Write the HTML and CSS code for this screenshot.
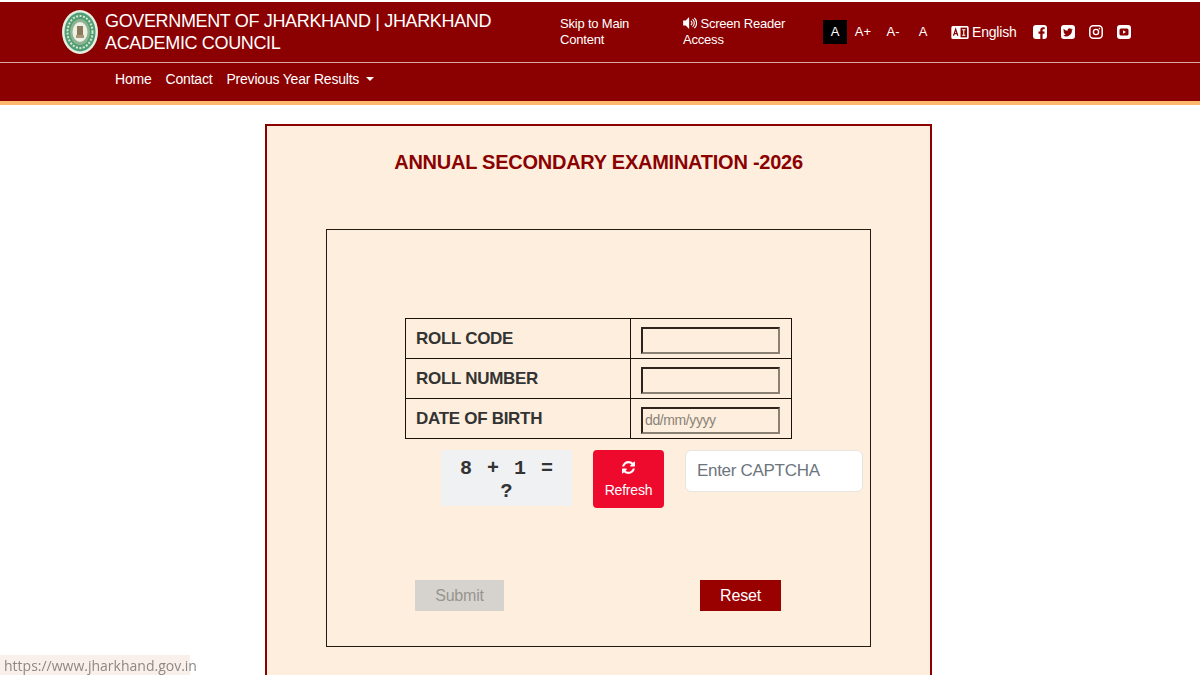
FILE: index.html
```html
<!DOCTYPE html>
<html lang="en">
<head>
    <meta charset="UTF-8">
    <meta name="viewport" content="width=device-width, initial-scale=1.0">
    <title>Annual Secondary Examination 2026</title>
    <link rel="stylesheet" href="styles.css">
</head>
<body>
    <header class="site-header">
        <div class="top-bar">
            <div class="brand">
                <svg class="emblem" viewBox="0 0 36 44">
                    <ellipse cx="18" cy="22" rx="18" ry="22" fill="#e6efe0"/>
                    <ellipse cx="18" cy="22" rx="15.5" ry="19.5" fill="#4f9d78"/>
                    <ellipse cx="18" cy="22" rx="12.5" ry="16" fill="none" stroke="#d9e6c8" stroke-width="2" stroke-dasharray="2 1.5"/>
                    <ellipse cx="18" cy="22" rx="10" ry="13" fill="#8fb58f"/>
                    <ellipse cx="18" cy="22" rx="7.5" ry="10" fill="#eef0e6"/>
                    <rect x="15" y="16" width="6" height="9" fill="#8a7a5c"/>
                    <rect x="14" y="25" width="8" height="3" fill="#a8987a"/>
                </svg>
                <span class="brand-name">GOVERNMENT OF JHARKHAND | JHARKHAND ACADEMIC COUNCIL</span>
            </div>
            <a class="skip-link" href="#main">Skip to Main Content</a>
            <a class="reader-link" href="#">
                <svg class="speaker" viewBox="0 0 16 14">
                    <path d="M7 0v14L3 10H0V4h3z" fill="#fff"/>
                    <path d="M9 4.5a3 3 0 0 1 0 5M11 2.5a6 6 0 0 1 0 9M13 1a8 8 0 0 1 0 12" fill="none" stroke="#fff" stroke-width="1.3"/>
                </svg>
                Screen Reader Access
            </a>
            <div class="font-sizes">
                <span class="size-btn active">A</span>
                <span class="size-btn">A+</span>
                <span class="size-btn">A-</span>
                <span class="size-btn">A</span>
            </div>
            <a class="lang-link" href="#">
                <svg class="lang-icon" viewBox="0 0 16 12">
                    <rect width="16" height="12" rx="1.5" fill="#fff"/>
                    <rect x="8.5" y="1.5" width="6" height="9" fill="#8b0000"/>
                    <path d="M10 3.5h3M11.5 3.5v5M10 8.5h3" stroke="#fff" stroke-width="1" fill="none"/>
                    <path d="M2 9l2-6 2 6M2.8 7h2.4" stroke="#8b0000" stroke-width="1.1" fill="none"/>
                </svg>
                English
            </a>
            <div class="socials">
                <svg viewBox="0 0 14 14"><rect width="14" height="14" rx="3" fill="#fff"/><path d="M9.6 14V8.7h1.7l.3-2.2h-2V5.2c0-.6.3-1 1-1h1.1V2.3c-.4 0-1-.1-1.6-.1-1.7 0-2.8 1-2.8 2.8v1.5H5.500v2.200h1.800V14z" fill="#8b0000"/></svg>
                <svg viewBox="0 0 14 14"><rect width="14" height="14" rx="3" fill="#fff"/><path d="M11.500 4.200c-.4.200-.7.300-1.100.3.400-.2.700-.6.800-1-.4.200-.8.400-1.200.5a2 2 0 0 0-3.400 1.800C5 5.700 3.600 5 2.700 3.800c-.5.900-.2 2 .6 2.600-.3 0-.6-.1-.9-.2 0 .9.700 1.800 1.600 2-.3.100-.6.100-.9 0 .3.800 1 1.300 1.900 1.400-.8.600-1.900.9-2.900.8a5.700 5.700 0 0 0 8.800-5.100c.3-.2.600-.6.800-.9z" fill="#8b0000"/></svg>
                <svg viewBox="0 0 14 14"><rect x=".8" y=".8" width="12.400" height="12.400" rx="3.500" fill="none" stroke="#fff" stroke-width="1.500"/><circle cx="7" cy="7" r="2.600" fill="none" stroke="#fff" stroke-width="1.400"/><circle cx="10.400" cy="3.600" r=".8" fill="#fff"/></svg>
                <svg viewBox="0 0 14 14"><rect width="14" height="14" rx="3" fill="#fff"/><rect x="2.500" y="3.500" width="9" height="7" rx="1.500" fill="#8b0000"/><path d="M6 5.200v3.600L9 7z" fill="#fff"/></svg>
            </div>
        </div>
        <nav class="main-nav">
            <a href="#">Home</a>
            <a href="#">Contact</a>
            <a href="#" class="dropdown">Previous Year Results</a>
        </nav>
    </header>

    <main class="card" id="main">
        <h2 class="card-title">ANNUAL SECONDARY EXAMINATION -2026</h2>
        <div class="form-box">
            <table class="form-table">
                <tr>
                    <th>ROLL CODE</th>
                    <td><input type="text" class="field"></td>
                </tr>
                <tr>
                    <th>ROLL NUMBER</th>
                    <td><input type="text" class="field"></td>
                </tr>
                <tr>
                    <th>DATE OF BIRTH</th>
                    <td><input type="text" class="field" placeholder="dd/mm/yyyy"></td>
                </tr>
            </table>
            <div class="captcha-row">
                <div class="captcha-box">8 + 1 = ?</div>
                <button class="refresh-btn" type="button">
                    <svg class="refresh-icon" viewBox="0 0 1536 1536"><path d="M1511 928q0 5-1 7-64 268-268 434.5t-478 166.5q-146 0-282.5-55t-243.5-157l-129 129q-19 19-45 19t-45-19-19-45v-448q0-26 19-45t45-19h448q26 0 45 19t19 45-19 45l-137 137q71 66 161 102t187 36q134 0 250-65t186-179q11-17 53-117 8-23 30-23h192q13 0 22.500 9.500t9.500 22.500zm25-800v448q0 26-19 45t-45 19h-448q-26 0-45-19t-19-45 19-45l138-138q-148-137-349-137-134 0-250 65t-186 179q-11 17-53 117-8 23-30 23h-199q-13 0-22.500-9.500t-9.500-22.500v-7q65-268 270-434.500t480-166.500q146 0 284 55.500t245 156.500l130-129q19-19 45-19t45 19 19 45z" fill="#fff"/></svg>
                    Refresh
                </button>
                <input type="text" class="captcha-input" placeholder="Enter CAPTCHA">
            </div>
            <div class="actions">
                <button class="submit-btn" type="button" disabled>Submit</button>
                <button class="reset-btn" type="button">Reset</button>
            </div>
        </div>
    </main>

    <div class="status-bubble">https://www.jharkhand.gov.in</div>
</body>
</html>
```

FILE: styles.css
```css
html, body {
    height: 675px;
    overflow: hidden;
}
body {
    margin: 0;
    background: #fff;
    font-family: "Liberation Sans", Arial, sans-serif;
    color: #fff;
}
a {
    color: inherit;
    text-decoration: none;
}

/* Header */
.site-header {
    margin-top: 2px;
    background: #8b0000;
    border-bottom: 4px solid #fdb96b;
}
.top-bar {
    display: flex;
    align-items: center;
    height: 60px;
    padding-left: 62px;
    border-bottom: 1px solid #d9a9a6;
}
.brand {
    display: flex;
    align-items: center;
    gap: 7px;
    width: 498px;
}
.emblem {
    flex: none;
    width: 36px;
    height: 44px;
}
.brand-name {
    width: 400px;
    font-size: 18px;
    line-height: 22px;
    letter-spacing: -0.35px;
}
.skip-link {
    width: 123px;
    padding-right: 30px;
    box-sizing: border-box;
    font-size: 13px;
    line-height: 16px;
    letter-spacing: -0.2px;
}
.reader-link {
    width: 140px;
    padding-right: 30px;
    box-sizing: border-box;
    font-size: 13px;
    line-height: 16px;
    letter-spacing: -0.2px;
}
.speaker {
    width: 14px;
    height: 12px;
    vertical-align: -1px;
}
.font-sizes {
    display: flex;
    align-items: center;
    width: 128px;
    font-size: 13px;
}
.size-btn {
    width: 24px;
    height: 24px;
    margin-right: 6px;
    line-height: 24px;
    text-align: center;
}
.size-btn.active {
    background: #000;
    margin-right: 4px;
}
.lang-link {
    display: flex;
    align-items: center;
    gap: 3px;
    width: 82px;
    font-size: 14px;
    letter-spacing: -0.2px;
}
.lang-icon {
    width: 18px;
    height: 13px;
}
.socials {
    display: flex;
    gap: 14px;
}
.socials svg {
    width: 14px;
    height: 14px;
}
.main-nav {
    display: flex;
    gap: 14px;
    height: 38px;
    padding-left: 115px;
    font-size: 14px;
    line-height: 32px;
    letter-spacing: -0.2px;
}
.dropdown::after {
    content: "";
    display: inline-block;
    margin-left: 7px;
    vertical-align: 3px;
    border-top: 4px solid #fff;
    border-left: 4px solid transparent;
    border-right: 4px solid transparent;
}

/* Card */
.card {
    box-sizing: border-box;
    width: 667px;
    height: 640px;
    margin: 19px 0 0 265px;
    padding: 0 59px;
    background: #fdeedd;
    border: 2px solid #8b0000;
}
.card-title {
    margin: 24px 0 0;
    color: #8b0000;
    font-size: 20px;
    line-height: 24px;
    text-align: center;
    letter-spacing: -0.25px;
}
.form-box {
    box-sizing: border-box;
    width: 545px;
    height: 418px;
    margin-top: 55px;
    padding-top: 88px;
    border: 1px solid #231a12;
}
.form-table {
    width: 387px;
    margin-left: 78px;
    border-collapse: collapse;
}
.form-table th,
.form-table td {
    height: 39px;
    padding: 0;
    border: 1px solid #1a1208;
}
.form-table th {
    width: 225px;
    padding-left: 10px;
    box-sizing: border-box;
    color: #333;
    font-size: 17px;
    text-align: left;
    letter-spacing: -0.3px;
}
.field {
    display: block;
    box-sizing: border-box;
    width: 139px;
    height: 27px;
    margin: 3px 0 0 10px;
    padding: 0 2px;
    background: transparent;
    border: 2px solid;
    border-color: #2e241b #8a8174 #8a8174 #2e241b;
    font-family: inherit;
    font-size: 14px;
    letter-spacing: -0.4px;
}
.field::placeholder {
    color: #8a8378;
}
.captcha-row {
    display: flex;
    align-items: flex-start;
    margin: 11px 0 0 114px;
}
.captcha-box {
    box-sizing: border-box;
    width: 131px;
    height: 56px;
    padding: 7px 14px 0;
    background: #eff1f3;
    color: #333;
    font-family: "Liberation Mono", monospace;
    font-size: 20px;
    font-weight: bold;
    line-height: 23px;
    text-align: center;
    word-spacing: 3px;
}
.refresh-btn {
    width: 71px;
    height: 58px;
    margin-left: 21px;
    padding: 0;
    background: #ee0a2d;
    border: none;
    border-radius: 4px;
    color: #fff;
    font-family: inherit;
    font-size: 14px;
    letter-spacing: -0.2px;
}
.refresh-icon {
    display: block;
    width: 13px;
    height: 13px;
    margin: 0 auto 8px;
}
.captcha-input {
    box-sizing: border-box;
    width: 178px;
    height: 42px;
    margin-left: 21px;
    padding: 0 11px;
    background: #fff;
    border: 1px solid #e8e4df;
    border-radius: 6px;
    font-family: inherit;
    font-size: 17px;
    letter-spacing: -0.3px;
}
.captcha-input::placeholder {
    color: #6c757d;
}
.actions {
    display: flex;
    margin: 72px 0 0 88px;
}
.actions button {
    height: 31px;
    padding: 0;
    border: none;
    font-family: inherit;
    font-size: 16px;
    letter-spacing: -0.2px;
}
.submit-btn {
    width: 89px;
    background: #d6d3ce;
    color: #98958f;
}
.reset-btn {
    width: 81px;
    margin-left: 196px;
    background: #990000;
    color: #fff;
}

/* Link preview in the corner */
.status-bubble {
    position: fixed;
    left: 0;
    bottom: 0;
    box-sizing: border-box;
    width: 190px;
    height: 20px;
    padding-left: 4px;
    background: #f9efeb;
    color: #8d8885;
    font-family: "Open Sans", sans-serif;
    font-size: 14px;
    line-height: 22px;
    white-space: nowrap;
}
```
